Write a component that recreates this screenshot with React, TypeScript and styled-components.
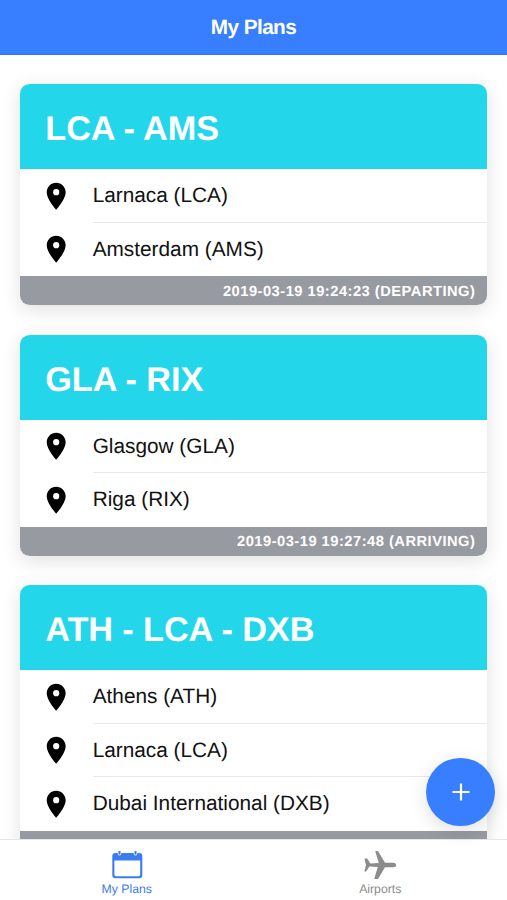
import React from "react";
import styled, { createGlobalStyle } from "styled-components";

const GlobalStyle = createGlobalStyle`
  *, *::before, *::after { box-sizing: border-box; }
  body {
    margin: 0;
    overflow: hidden;
    background: #fff;
    font-family: "Liberation Sans", Arial, sans-serif;
    text-rendering: geometricPrecision;
  }
`;

const Screen = styled.div`
  position: relative;
  display: flex;
  flex-direction: column;
  height: 100vh;
  overflow: hidden;
`;

const Header = styled.header`
  flex: none;
  display: flex;
  align-items: center;
  justify-content: center;
  height: 54.6px;
  background: #387fff;
  border-bottom: 1px solid #3475ea;
`;

const HeaderTitle = styled.h1`
  margin: 2px 0 0;
  color: #fff;
  font-size: 20.8px;
  font-weight: 700;
  letter-spacing: -0.6px;
`;

const Content = styled.main`
  flex: 1;
  min-height: 0;
  overflow: hidden;
  padding: 29.4px 19.6px 0 20.4px;
  display: flex;
  flex-direction: column;
  gap: 29.4px;
`;

const Card = styled.article`
  flex: none;
  overflow: hidden;
  border-radius: 9.8px;
  background: #fff;
  box-shadow: 0 4.9px 19.6px rgba(0, 0, 0, 0.12);
`;

const CardHeader = styled.header`
  display: flex;
  align-items: center;
  height: 85px;
  padding: 6px 24.9px 0;
  background: #24d6ea;
`;

const CardTitle = styled.h2`
  margin: 0;
  color: #fff;
  font-size: 34.3px;
  line-height: 41px;
  font-weight: 700;
  letter-spacing: -0.1px;
`;

const StopList = styled.ul`
  margin: 0;
  padding: 0;
  list-style: none;
`;

const Stop = styled.li`
  display: flex;
  align-items: center;
  height: 53.7px;
  padding-left: 19.8px;
`;

const PinIcon = styled.svg`
  flex: none;
  width: 32.4px;
  height: 32.4px;
  margin-right: 20.1px;
`;

const StopName = styled.div<{ $last: boolean }>`
  flex: 1;
  height: 100%;
  padding-top: 1px;
  line-height: 52px;
  border-bottom: 1px solid ${(p) => (p.$last ? "transparent" : "#e8e8e9")};
  color: #111;
  font-size: 20.8px;
`;

const CardFooter = styled.footer`
  display: flex;
  align-items: center;
  justify-content: flex-end;
  height: 28.8px;
  padding: 2px 12px 0 0;
  background: #989aa2;
  color: #fff;
  font-size: 14.7px;
  font-weight: 700;
  letter-spacing: 0.49px;
`;

const AddButton = styled.button`
  position: absolute;
  right: 12.2px;
  bottom: 73.7px;
  width: 68.6px;
  height: 68.6px;
  display: flex;
  align-items: center;
  justify-content: center;
  padding: 0;
  border: 0;
  border-radius: 50%;
  background: #387fff;
  box-shadow: 0 4.9px 19.6px rgba(0, 0, 0, 0.12);
`;

const TabBar = styled.nav`
  flex: none;
  display: grid;
  grid-template-columns: 1fr 1fr;
  height: 61.5px;
  background: #fff;
  border-top: 1px solid #e6e6e7;
`;

const Tab = styled.a<{ $active?: boolean }>`
  display: flex;
  flex-direction: column;
  align-items: center;
  padding-top: 8px;
  color: ${(p) => (p.$active ? "#3b7cf0" : "#8c8c8c")};
  font-size: 12.25px;
  line-height: 14px;
`;

const TabIcon = styled.svg`
  width: 36px;
  height: 34px;
`;

type Plan = { title: string; stops: string[]; status: string };

const plans: Plan[] = [
  {
    title: "LCA - AMS",
    stops: ["Larnaca (LCA)", "Amsterdam (AMS)"],
    status: "2019-03-19 19:24:23 (DEPARTING)",
  },
  {
    title: "GLA - RIX",
    stops: ["Glasgow (GLA)", "Riga (RIX)"],
    status: "2019-03-19 19:27:48 (ARRIVING)",
  },
  {
    title: "ATH - LCA - DXB",
    stops: ["Athens (ATH)", "Larnaca (LCA)", "Dubai International (DXB)"],
    status: "",
  },
];

function PlanCard({ title, stops, status }: Plan) {
  return (
    <Card>
      <CardHeader>
        <CardTitle>{title}</CardTitle>
      </CardHeader>
      <StopList>
        {stops.map((stop, i) => (
          <Stop key={stop}>
            <PinIcon viewBox="0 0 24 24" aria-hidden="true">
              <path d="M12 2C8.13 2 5 5.13 5 9c0 5.25 7 13 7 13s7-7.75 7-13c0-3.87-3.13-7-7-7zm0 9.3a2.3 2.3 0 1 1 0-4.6 2.3 2.3 0 0 1 0 4.6z" />
            </PinIcon>
            <StopName $last={i === stops.length - 1}>{stop}</StopName>
          </Stop>
        ))}
      </StopList>
      <CardFooter>{status}</CardFooter>
    </Card>
  );
}

export default function App() {
  return (
    <>
      <GlobalStyle />
      <Screen>
        <Header>
          <HeaderTitle>My Plans</HeaderTitle>
        </Header>
        <Content>
          {plans.map((plan) => (
            <PlanCard key={plan.title} {...plan} />
          ))}
        </Content>
        <AddButton aria-label="Add plan">
          <svg width="18" height="18" viewBox="0 0 18 18" aria-hidden="true">
            <path d="M9 .5v17M.5 9h17" stroke="#fff" strokeWidth="2.2" />
          </svg>
        </AddButton>
        <TabBar>
          <Tab $active>
            <TabIcon viewBox="0 0 36 34" aria-hidden="true">
              <path
                fill="currentColor"
                fillRule="evenodd"
                d="M6.3 5h2.4v.8a1.8 1.8 0 0 0 3.6 0V5h12.4v.8a1.8 1.8 0 0 0 3.6 0V5h2a3 3 0 0 1 3 3v19.3a3 3 0 0 1-3 3h-24a3 3 0 0 1-3-3V8a3 3 0 0 1 3-3zM5.4 12.4v14.2a1.6 1.6 0 0 0 1.6 1.6h22.6a1.6 1.6 0 0 0 1.6-1.6V12.4z"
              />
              <path
                d="M9.5 3h2v2.8a1 1 0 0 1-2 0zM25.5 3h2v2.8a1 1 0 0 1-2 0z"
                fill="currentColor"
              />
            </TabIcon>
            My Plans
          </Tab>
          <Tab>
            <TabIcon viewBox="0 0 36 34" aria-hidden="true">
              <path
                fill="currentColor"
                d="M31.5 14.7H23L16.6 4.1c-.5-.8-.9-1.1-1.6-1.1h-1.8l3.6 12-8.5.5-2.4-4.1c-.4-.6-.8-.8-1.4-.8H2.4L4 17l-1.6 6.4h1.1c.6 0 1-.2 1.4-.8l2.4-4.1 8.5.5-3.6 12H15c.7 0 1.1-.3 1.6-1.1L23 19.3h8.5c1.5 0 2.7-1 2.7-2.3s-1.2-2.3-2.7-2.3z"
              />
            </TabIcon>
            Airports
          </Tab>
        </TabBar>
      </Screen>
    </>
  );
}
